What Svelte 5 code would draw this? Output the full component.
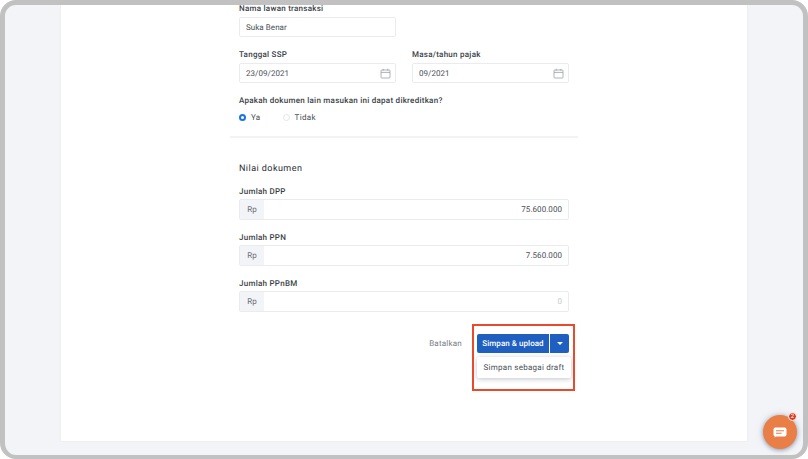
<script>
    let rows = [
        { label: "Jumlah DPP", value: "75.600.000" },
        { label: "Jumlah PPN", value: "7.560.000" },
        { label: "Jumlah PPnBM", value: "0", empty: true }
    ]
</script>

{#snippet calendar()}
    <svg class="cal" width="11" height="11" viewBox="0 0 11 11" fill="none" stroke="#9a9ea6" stroke-width="0.8">
        <rect x="1" y="2" width="9" height="8" rx="0.8" />
        <path d="M1 4.4H10M3.2 .8V2.6M7.8 .8V2.6" />
    </svg>
{/snippet}

<div class="frame">
    <main class="card">
        <div class="form">
            <div class="label first">Nama lawan transaksi</div>
            <div class="input half">Suka Benar</div>

            <div class="pair">
                <div>
                    <div class="label">Tanggal SSP</div>
                    <div class="input">23/09/2021 {@render calendar()}</div>
                </div>
                <div>
                    <div class="label">Masa/tahun pajak</div>
                    <div class="input">09/2021 {@render calendar()}</div>
                </div>
            </div>

            <div class="label question">Apakah dokumen lain masukan ini dapat dikreditkan?</div>
            <div class="radios">
                <span class="radio on"><i></i>Ya</span>
                <span class="radio"><i></i>Tidak</span>
            </div>
        </div>

        <div class="divider"></div>

        <div class="form">
            <h3>Nilai dokumen</h3>
            {#each rows as row}
                <div class="label money-label">{row.label}</div>
                <div class="money">
                    <span class="prefix">Rp</span>
                    <span class="amount" class:empty={row.empty}>{row.value}</span>
                </div>
            {/each}

            <div class="actions">
                <span class="cancel">Batalkan</span>
                <div class="split">
                    <button class="save">Simpan &amp; upload</button>
                    <button class="caret" aria-label="Lainnya"><span></span></button>
                    <div class="menu">Simpan sebagai draft</div>
                    <div class="highlight"></div>
                </div>
            </div>
        </div>
    </main>

    <div class="chat">
        <svg width="14" height="11" viewBox="0 0 14 11">
            <path fill="#fff" d="M2.4 .6H11.6A1.9 1.9 0 0 1 13.5 2.5V7.6A1.9 1.9 0 0 1 11.6 9.5H3.4L1.6 10.6 1.9 9.4A1.9 1.9 0 0 1 .5 7.6V2.5A1.9 1.9 0 0 1 2.4 .6Z" />
            <path stroke="#e97f46" stroke-width="1.1" d="M3 3.7H11M3 6.3H8.6" />
        </svg>
        <span class="badge">2</span>
    </div>
</div>

<style>
    :global(body){
        margin: 0;
        background: #fff;
    }
    .frame{
        position: relative;
        box-sizing: border-box;
        width: 808px;
        height: 459px;
        border: solid #c1c1c1;
        border-width: 5px 5px 4px 5px;
        border-radius: 16px;
        background: #f2f4f8;
        overflow: hidden;
        padding: 0 56px 12px 56px;
        font-family: Roboto, sans-serif;
        color: #2a2f36;
        text-rendering: geometricPrecision;
    }
    .card{
        box-sizing: border-box;
        height: 100%;
        background: #fff;
        padding-left: 169px;
        width: 686px;
        box-shadow: 0 0 0 0.5px #e8eaee;
    }
    .form{
        width: 330px;
        margin-left: 9px;
    }
    .label{
        padding-top: 1px;
        font-size: 8px;
        font-weight: 500;
        line-height: 10px;
        letter-spacing: 0.26px;
        color: #3a3f47;
    }
    .first{
        margin-top: -2px;
    }
    .input{
        box-sizing: border-box;
        display: flex;
        align-items: center;
        justify-content: space-between;
        height: 20px;
        margin-top: 3px;
        padding: 0 4px 0 6px;
        border: 1px solid #e9ebef;
        border-radius: 2px;
        font-size: 8px;
        letter-spacing: 0.05px;
        color: #4a4f57;
    }
    .half{
        width: 157px;
    }
    .pair{
        display: grid;
        grid-template-columns: 157px 157px;
        gap: 16px;
        margin-top: 12px;
    }
    .question{
        margin-top: 12px;
    }
    .radios{
        display: flex;
        gap: 22px;
        margin-top: 6px;
        height: 10px;
        align-items: center;
    }
    .radio{
        display: flex;
        align-items: center;
        gap: 5px;
        font-size: 8px;
        letter-spacing: 0.35px;
        color: #4a4f57;
    }
    .radio i{
        box-sizing: border-box;
        width: 7px;
        height: 7px;
        border-radius: 50%;
        border: 1px solid #e3e5ea;
    }
    .radio.on i{
        border: 2px solid #1a73e8;
        background: #fff;
    }
    .divider{
        width: 348px;
        height: 2px;
        margin-top: 14px;
        background: #f2f3f7;
    }
    h3{
        margin: 25px 0 0;
        font-size: 9px;
        font-weight: 400;
        line-height: 12px;
        letter-spacing: 0.45px;
        color: #2a2f36;
    }
    .money-label{
        margin-top: 12px;
    }
    .money-label:first-of-type{
        margin-top: 11px;
    }
    .money{
        box-sizing: border-box;
        display: flex;
        align-items: center;
        height: 21px;
        margin-top: 2px;
        border: 1px solid #e9ebef;
        border-radius: 2px;
        font-size: 8px;
        letter-spacing: 0.05px;
    }
    .prefix{
        display: flex;
        align-items: center;
        justify-content: center;
        width: 24px;
        height: 100%;
        background: #f2f4f8;
        color: #6a6f77;
    }
    .amount{
        flex: 1;
        padding-right: 6px;
        text-align: right;
        color: #4a4f57;
    }
    .amount.empty{
        color: #c4c7cc;
    }
    .actions{
        display: flex;
        justify-content: flex-end;
        align-items: center;
        gap: 15px;
        margin-top: 22px;
    }
    .cancel{
        font-size: 8px;
        letter-spacing: 0.22px;
        color: #777c84;
    }
    .split{
        position: relative;
        display: flex;
        gap: 1px;
    }
    button{
        border: 0;
        padding: 0;
        height: 19px;
        background: #1f5fbf;
        color: #fff;
        font-family: inherit;
        font-weight: 500;
        font-size: 8px;
        letter-spacing: 0.05px;
        text-rendering: geometricPrecision;
    }
    .save{
        width: 72px;
        border-radius: 2px 0 0 2px;
    }
    .caret{
        display: flex;
        align-items: center;
        justify-content: center;
        width: 19px;
        border-radius: 0 2px 2px 0;
    }
    .caret span{
        border: 3px solid transparent;
        border-top-color: #fff;
        border-bottom: 0;
    }
    .menu{
        position: absolute;
        top: 23px;
        left: 0;
        width: 94px;
        height: 21px;
        line-height: 21px;
        text-align: center;
        background: #fff;
        border-radius: 2px;
        box-shadow: 0 1px 5px rgba(30, 40, 60, 0.28);
        font-size: 8px;
        letter-spacing: 0.25px;
        color: #4a4f57;
    }
    .highlight{
        position: absolute;
        top: -10px;
        left: -5px;
        width: 103px;
        height: 67px;
        box-sizing: border-box;
        border: 2px solid #ea4a2c;
    }
    .chat{
        position: absolute;
        right: 6px;
        bottom: 6px;
        display: flex;
        align-items: center;
        justify-content: center;
        width: 34px;
        height: 34px;
        border-radius: 50%;
        background: #e97f46;
        box-shadow: 0 1px 4px rgba(40, 60, 100, 0.45), 0 0 8px rgba(60, 70, 90, 0.15);
    }
    .badge{
        position: absolute;
        top: -3px;
        right: 0;
        box-sizing: border-box;
        width: 9px;
        height: 9px;
        line-height: 7px;
        text-align: center;
        border-radius: 50%;
        border: 1px solid #fff;
        background: #dc3a26;
        color: #fff;
        font-size: 6px;
    }
</style>
